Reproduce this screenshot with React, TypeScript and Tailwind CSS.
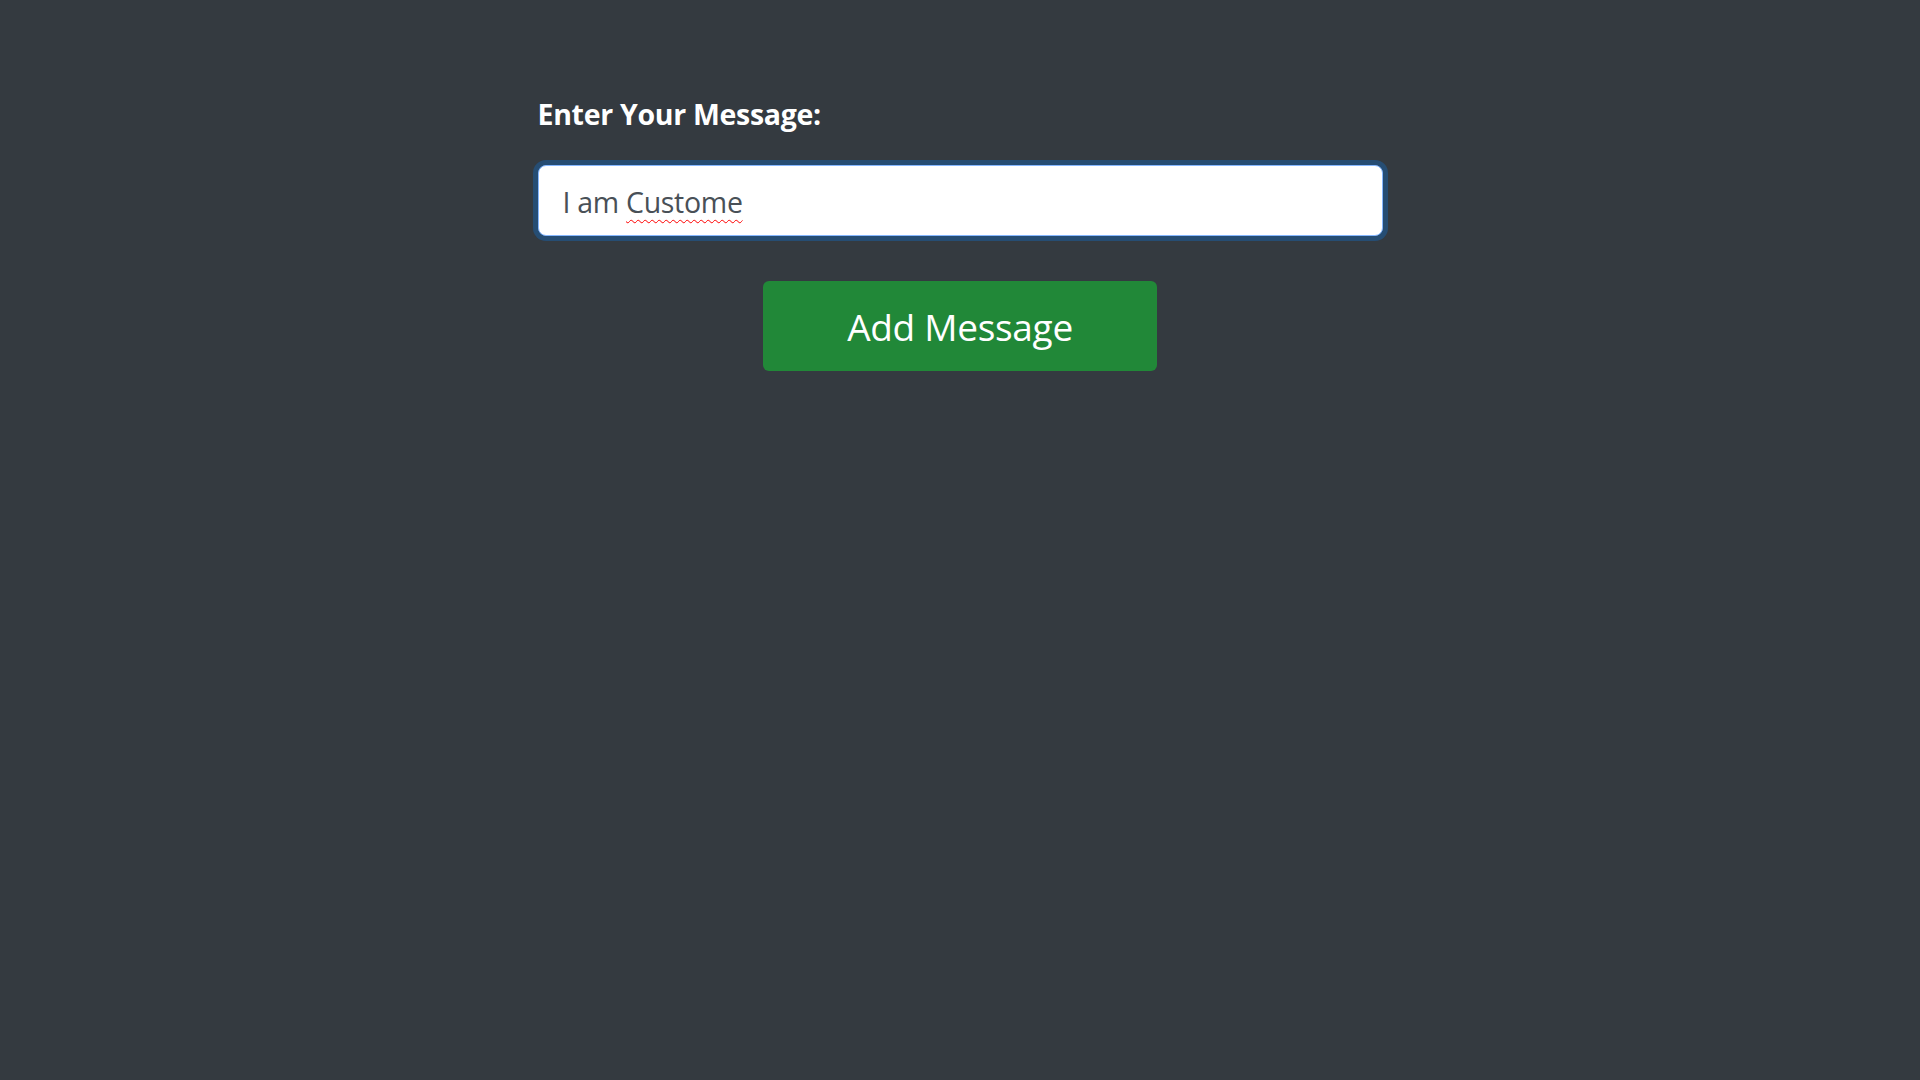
import React, { useState } from 'react';

export default function App() {
  const [message] = useState('I am Custome');

  return (
    <div className="min-h-screen w-full bg-[#343a40] font-['Open_Sans',sans-serif]">
      <div className="mx-auto w-[845px] pt-[92px]">
        {/* Label */}
        <label className="block text-[28.5px] font-bold leading-[45px] tracking-[-0.3px] text-white mb-[28px]">
          Enter Your Message:
        </label>

        {/* Input (focused look) */}
        <div className="rounded-[8px] border border-[#86b7fe] bg-white h-[71px] flex items-center px-[24px] shadow-[0_0_0_5px_#264d73]">
          <span className="text-[28.5px] text-[#495057] leading-none tracking-[-0.3px] pt-[4px]">
            I am{' '}
            <span className="underline decoration-wavy decoration-[#ff0000] decoration-1 underline-offset-[6px]">
              {message.replace('I am ', '')}
            </span>
          </span>
        </div>

        {/* Button */}
        <div className="flex justify-center mt-[45px]">
          <button className="w-[394px] h-[90px] rounded-[6px] bg-[#218838] text-white text-[37px] leading-none tracking-[-0.3px]">
            Add Message
          </button>
        </div>
      </div>
    </div>
  );
}
